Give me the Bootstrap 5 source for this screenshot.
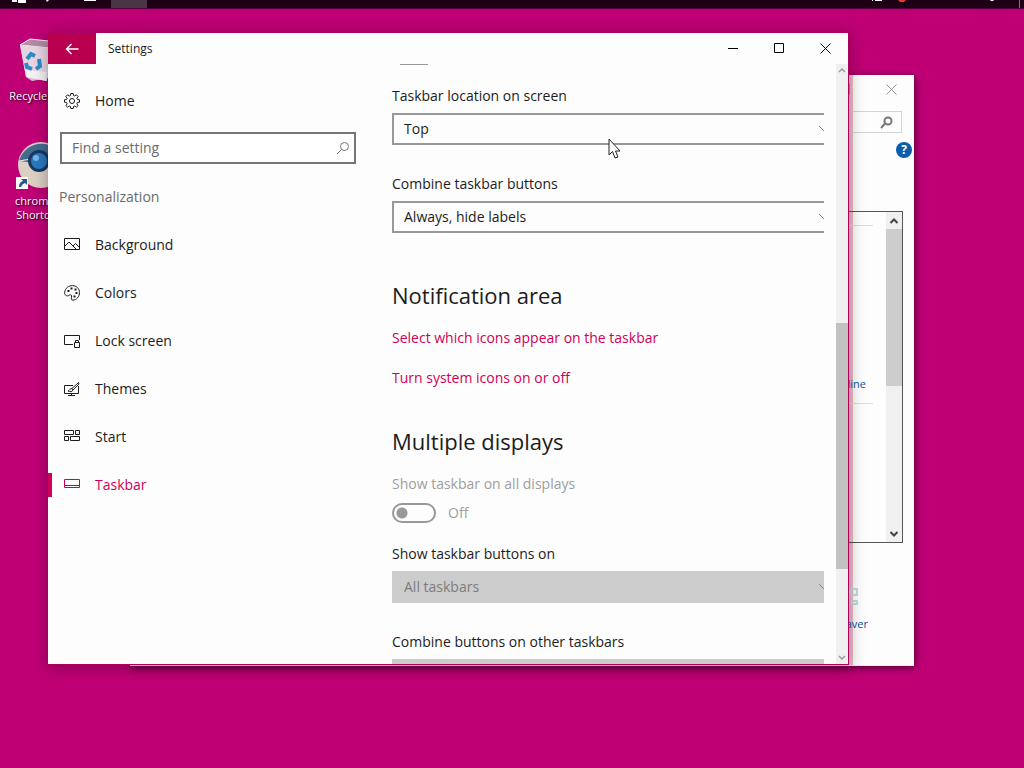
<!DOCTYPE html>
<html lang="en">
<head>
<meta charset="utf-8">
<meta name="viewport" content="width=device-width, initial-scale=1">
<title>Settings</title>
<link href="https://cdn.jsdelivr.net/npm/bootstrap@5.3.0/dist/css/bootstrap.min.css" rel="stylesheet">
<style>
:root { --accent: #cf0057; --desk: #bf0075; }
body { background: var(--desk); font-family: "Open Sans", "Noto Sans", sans-serif; font-size: 14px; line-height: 24px; color: #1c1c1c; }
svg { display: block; flex: none; }
button { border: 0; background: none; padding: 0; color: inherit; }
.strip { height: 9px; background: #1d0016; border-bottom: 1px solid #55003a; }
.strip-active { width: 36px; height: 8px; background: #4a3546; margin-left: 14px; }
.desk-icons { width: 76px; padding-top: 28px; }
.desk-item { display: block; color: #fff; font-size: 11px; line-height: 14px; text-shadow: 1px 1px 2px #000; }
.desk-item + .desk-item { margin-top: 38px; }
.win { position: absolute; background: #fdfdfd; }
.win-back { left: 130px; right: 110px; top: 75px; bottom: 102px; border-bottom: 1px solid #f4e8f0; box-shadow: 1px 2px 8px rgba(0,0,0,.55); font-size: 11px; }
.win-back { background: linear-gradient(#f3bccb, #f3bccb) right 61px top / 4px 100% no-repeat #fdfdfd; }
.win-front { left: 48px; right: 175px; top: 33px; bottom: 103px; border: solid #b10058; border-width: 0 1px 1px 0; box-shadow: 0 2px 14px 1px rgba(0,0,0,.3); }
.cap { width: 46px; }
.title-front { height: 31px; font-size: 12px; }
.title-back { height: 28px; color: #999; }
.back-btn { width: 48px; background: #b9004f; color: #fff; }
.side { width: 320px; padding-top: 13px; }
.side-link { height: 48px; padding-left: 16px; gap: 15px; color: #1c1c1c; text-decoration: none; }
.side-link.active { color: var(--accent); background: linear-gradient(var(--accent), var(--accent)) 0 50% / 4px 24px no-repeat; }
.find { height: 32px; border: 2px solid #767676; margin: 7px 12px 9px; padding: 0 4px 0 10px; background: #fff; }
.find input { border: 0; outline: 0; background: none; padding: 0; min-width: 0; }
.find input::placeholder { color: #6b6b6b; opacity: 1; }
.side-head { height: 48px; padding-left: 11px; color: #6b6b6b; font-size: 14px; line-height: 48px; font-weight: 400; margin: 0; }
.pane { padding: 0 12px 0 24px; }
.cut-toggle { width: 28px; height: 1px; background: #999; margin: 0 0 19px 8px; }
.field { margin-bottom: 27px; }
.field label { display: block; margin-bottom: 5px; }
.clip { overflow: hidden; }
.pick { display: block; appearance: none; width: calc(100% + 8px); height: 32px; border: 2px solid #999; border-radius: 0; padding: 0 10px; color: #1c1c1c; background: #fdfdfd url("data:image/svg+xml,%3Csvg xmlns='http://www.w3.org/2000/svg' width='14' height='8'%3E%3Cpath d='M1 1l6 6 6-6' fill='none' stroke='%23888'/%3E%3C/svg%3E") right -2px top 10px no-repeat; }
.pick:disabled { background-color: #ccc; border-color: #ccc; color: #7c7c7c; opacity: 1; }
.sect { font-size: 22px; line-height: 32px; font-weight: 400; margin: 46px 0 15px; }
.sect-next { margin-top: 35px; }
.pane-link { display: block; width: fit-content; color: var(--accent); text-decoration: none; margin-bottom: 16px; }
.dim { color: #9d9d9d; }
.toggle-row { margin: 5px 0 17px; }
.flip { appearance: none; width: 44px; height: 20px; border: 2px solid #999; border-radius: 10px; margin: 0; background: radial-gradient(circle at 8px 8px, #999 5px, transparent 6px); }
.bar { width: 12px; background: #f0f0f0; color: #999; }
.bar-top { flex: 246 0 0; }
.bar-thumb { flex: 247 0 0; background: #c2c2c2; }
.bar-end { flex: 82 0 0; }
.seek { height: 22px; border: 1px solid #d4d4d4; margin: 8px 12px 0; padding-right: 8px; color: #777; }
.help { width: 16px; height: 16px; border-radius: 50%; background: #0a5cad; color: #fff; font-weight: 700; font-size: 12px; line-height: 16px; margin: 9px 2px 53px; }
.gallery { border: 1px solid #555; margin: 0 11px; }
.gallery-bar { width: 16px; background: #f0f0f0; color: #444; }
.gallery-bar .thumb { flex: 157 0 0; background: #cdcdcd; }
.gallery-bar .rest { flex: 140 0 0; }
.shelf { border-top: 1px solid #ddd; margin: 13px 13px 0 0; }
.shelf-next { height: 139px; margin-top: 9px; }
.back-link { color: #0b57a4; text-decoration: none; line-height: 20px; }
.gallery .back-link { padding-right: 20px; }
.saver { height: 122px; padding: 44px 46px 0 0; gap: 7px; }
.chrome-art { margin-left: 16px; }
.pointer { position: absolute; left: 608px; top: 138px; }
</style>
</head>
<body class="vh-100 overflow-hidden position-relative">

<!-- task bar along the top edge -->
<div class="strip d-flex align-items-start">
  <svg width="97" height="8"><path d="M12 0h5v2h-5zM18 0h8v3h-8zM46 0h3l-2 2zM84 0h12v1H84z" fill="#fff"/></svg>
  <div class="strip-active"></div>
  <svg class="ms-auto" width="156" height="8"><path d="M4 0h1v1H4zM7 0h7v1H7zM122 0h4l-1 1h-2z" fill="#fff"/><path d="M30 0h8l-2 2h-4z" fill="#e23a2e"/><path d="M151.500 0v8" stroke="#88707f"/></svg>
</div>

<!-- desktop shortcuts -->
<div class="desk-icons text-center">
  <a class="desk-item text-decoration-none" href="#">
    <svg class="ms-3 mb-1" width="46" height="48" viewBox="0 0 46 48">
      <path d="M4 8l10-6 28 3-4 35-22 4-6-4z" fill="#d9bfd2"/><path d="M4 8l10-6 28 3-8 6z" fill="#b58ba6" stroke="#eee"/>
      <path d="M4 8l30 3-3 33-21-4z" fill="#e6d5e1"/><path d="M10 33l21 2-1 9-19-4z" fill="#f4f1f4"/>
      <path d="M11 22l4-5 4 2M23 22l1 7-4 3M16 32l-5-2-1-4" fill="none" stroke="#2b8bcb" stroke-width="4"/>
    </svg>
    <span class="d-block text-nowrap">Recycle Bin</span>
  </a>
  <a class="desk-item text-decoration-none" href="#">
    <svg class="chrome-art mb-1" width="48" height="49" viewBox="0 0 48 49">
      <circle cx="25" cy="24" r="23" fill="#dccfc3"/><path d="M3 20a23 23 0 0 1 42-6H25a11 11 0 0 0-10 6l-3 1z" fill="#456a90"/>
      <path d="M3 20l12-2 2 10" fill="none" stroke="#eee"/><circle cx="23" cy="20" r="11" fill="#16395f"/><circle cx="23" cy="20" r="8" fill="#2b78bd"/><circle cx="20" cy="17" r="3" fill="#72b6e6"/>
      <path d="M0 36h12v12H0z" fill="#fff"/><path d="M3 46q0-5 4-6l-2-2h6v6l-2-2q-3 1-4 4z" fill="#225b88"/>
    </svg>
    <span class="d-block px-1">chrome - Shortcut</span>
  </a>
</div>

<!-- Personalization control panel, behind -->
<section class="win win-back d-flex flex-column" aria-label="Personalization">
  <div class="title-back d-flex justify-content-end">
    <button class="cap d-flex align-items-center justify-content-center" aria-label="Maximize"><svg width="12" height="12"><path d="M.5.500h10v11H.5z" fill="none" stroke="currentColor"/></svg></button>
    <button class="cap d-flex align-items-center justify-content-center" aria-label="Close"><svg width="11" height="11"><path d="M.5.500l10 10m0-10l-10 10" stroke="currentColor"/></svg></button>
  </div>
  <div class="seek d-flex align-items-center justify-content-end">
    <svg width="13" height="13"><circle cx="8" cy="5" r="3.500" fill="none" stroke="currentColor" stroke-width="2"/><path d="M5 7.500L1 12" stroke="currentColor" stroke-width="2"/></svg>
  </div>
  <button class="help align-self-end text-center" aria-label="Help">?</button>
  <div class="gallery flex-grow-1 d-flex">
    <div class="flex-grow-1 d-flex flex-column">
      <div class="shelf"></div>
      <div class="flex-grow-1"></div>
      <a class="back-link text-end" href="#">Get more themes online</a>
      <div class="shelf shelf-next"></div>
    </div>
    <div class="gallery-bar d-flex flex-column align-items-center">
      <svg width="16" height="17"><path d="M4.500 11L8 7.500l3.500 3.500" fill="none" stroke="currentColor" stroke-width="2"/></svg>
      <div class="thumb w-100"></div><div class="rest"></div>
      <svg width="16" height="16"><path d="M4.500 6L8 9.500 11.500 6" fill="none" stroke="currentColor" stroke-width="2"/></svg>
    </div>
  </div>
  <div class="saver d-flex flex-column align-items-end">
    <svg class="me-2" width="22" height="20"><path d="M12 2h7v6h-7zM14 14h5v3h-5z" fill="none" stroke="#c4dcda" stroke-width="2"/></svg>
    <a class="back-link" href="#">Screen Saver</a>
  </div>
</section>

<!-- Settings window, in front -->
<main class="win win-front d-flex flex-column">
  <header class="title-front d-flex align-items-stretch flex-shrink-0">
    <button class="back-btn d-flex align-items-center justify-content-center" aria-label="Back"><svg width="14" height="12"><path d="M13.500 6H1.500M6.500 1l-5 5 5 5" fill="none" stroke="currentColor" stroke-width="1.400"/></svg></button>
    <span class="ms-2 ps-1 align-self-center">Settings</span>
    <button class="cap ms-auto d-flex align-items-center justify-content-center" aria-label="Minimize"><svg width="11" height="11"><path d="M0 5.500h10" stroke="#000"/></svg></button>
    <button class="cap d-flex align-items-center justify-content-center" aria-label="Maximize"><svg width="11" height="11"><path d="M.5.500h9v9h-9z" fill="none" stroke="#000"/></svg></button>
    <button class="cap d-flex align-items-center justify-content-center" aria-label="Close"><svg width="11" height="11"><path d="M.5.500l10 10m0-10l-10 10" stroke="#000"/></svg></button>
  </header>
  <div class="d-flex flex-grow-1 overflow-hidden">
    <nav class="side flex-shrink-0">
      <a class="side-link d-flex align-items-center" href="#">
        <svg width="16" height="16" viewBox="0 0 16 16" fill="none" stroke="currentColor"><path d="M6.800.5h2.400l.3 2 1.200.5 1.700-1.200 1.700 1.700L12.900 5.200l.5 1.300 2.100.3v2.400l-2.100.3-.5 1.300 1.200 1.700-1.700 1.700-1.700-1.200-1.200.5-.3 2H6.800l-.3-2-1.200-.5-1.700 1.200-1.700-1.700 1.200-1.700-.5-1.300-2.100-.3V6.800l2.100-.3.5-1.300-1.200-1.700 1.700-1.700L5.300 3l1.200-.5z"/><circle cx="8" cy="8" r="2.500"/></svg>Home</a>
      <div class="find d-flex align-items-center">
        <input class="flex-grow-1" type="text" placeholder="Find a setting" aria-label="Find a setting">
        <svg width="14" height="14" fill="none" stroke="#777"><circle cx="8.500" cy="5.500" r="4"/><path d="M5.500 8.500L1 13"/></svg>
      </div>
      <h2 class="side-head">Personalization</h2>
      <a class="side-link d-flex align-items-center" href="#">
        <svg width="16" height="16" fill="none" stroke="currentColor"><path d="M.5 1.500h15v11H.5zM1 9l4-4 7 7M9 9l2.500-2.500L15 10"/></svg>Background</a>
      <a class="side-link d-flex align-items-center" href="#">
        <svg width="16" height="16" fill="none" stroke="currentColor"><path d="M.7 7C1.500 3 4.500.6 8.500.6c4 0 7 3 7 7s-3 7.500-6.500 7.500c-2 0-2-1.600-1.500-3 .5-1.800-.5-2.800-2-2-1.500 1-3 1-4 0C.5 9.200.5 8 .7 7z"/><path d="M3.500 6h2M6.500 3.500h2M10.500 4.500h2M11.500 8h2M9.500 11.500h2" stroke-width="1.800"/></svg>Colors</a>
      <a class="side-link d-flex align-items-center" href="#">
        <svg width="16" height="16" fill="none" stroke="currentColor"><path d="M9 11.500H.5v-9h15V7M10.500 9.500h5v5h-5zM11.500 9V7.500h3V9"/></svg>Lock screen</a>
      <a class="side-link d-flex align-items-center" href="#">
        <svg width="16" height="16" fill="none" stroke="currentColor"><path d="M9 4.500H.5v8h14V5M4 14.500h7M7.500 12.500v2M14.500 1.500L8 7.500l1 1.500 6-6zM8 7.500c-2-.5-2 2-4 2.500 2 1 4.500 1 5-1"/></svg>Themes</a>
      <a class="side-link d-flex align-items-center" href="#">
        <svg width="16" height="16" fill="none" stroke="currentColor"><path d="M.5 1.500h9v4h-9zM11.500 1.500h4v4h-4zM.5 7.500h4v4h-4zM6.500 7.500h9v4h-9z"/></svg>Start</a>
      <a class="side-link active d-flex align-items-center" href="#" aria-current="page">
        <svg width="16" height="16" fill="none" stroke="currentColor"><path d="M.5 2.500h15v8H.5zM0 8.500h16"/></svg>Taskbar</a>
    </nav>
    <div class="pane flex-grow-1">
      <div class="cut-toggle"></div>
      <div class="field"><label for="loc">Taskbar location on screen</label><div class="clip"><select id="loc" class="pick"><option>Top</option></select></div></div>
      <div class="field"><label for="comb">Combine taskbar buttons</label><div class="clip"><select id="comb" class="pick"><option>Always, hide labels</option></select></div></div>
      <h1 class="sect">Notification area</h1>
      <a class="pane-link" href="#">Select which icons appear on the taskbar</a>
      <a class="pane-link" href="#">Turn system icons on or off</a>
      <h1 class="sect sect-next">Multiple displays</h1>
      <label class="dim d-block" for="all">Show taskbar on all displays</label>
      <div class="dim toggle-row d-flex align-items-center"><input id="all" class="flip me-2" type="checkbox" role="switch" disabled><span class="ms-1">Off</span></div>
      <div class="field"><label for="on">Show taskbar buttons on</label><div class="clip"><select id="on" class="pick" disabled><option>All taskbars</option></select></div></div>
      <div class="field"><label for="other">Combine buttons on other taskbars</label><div class="clip"><select id="other" class="pick" disabled></select></div></div>
    </div>
    <div class="bar d-flex flex-column flex-shrink-0">
      <svg width="12" height="13"><path d="M3 8l3-3 3 3" fill="none" stroke="currentColor" stroke-width="1.500"/></svg>
      <div class="bar-top"></div><div class="bar-thumb"></div><div class="bar-end"></div>
      <svg width="12" height="13"><path d="M3 5l3 3 3-3" fill="none" stroke="currentColor" stroke-width="1.500"/></svg>
    </div>
  </div>
</main>

<svg class="pointer" width="14" height="22"><path d="M1 1v16l3.500-3.500L7 20l3-1-2.500-6H12z" fill="#fff" stroke="#222"/></svg>

<script src="https://cdn.jsdelivr.net/npm/bootstrap@5.3.0/dist/js/bootstrap.bundle.min.js"></script>
</body>
</html>
